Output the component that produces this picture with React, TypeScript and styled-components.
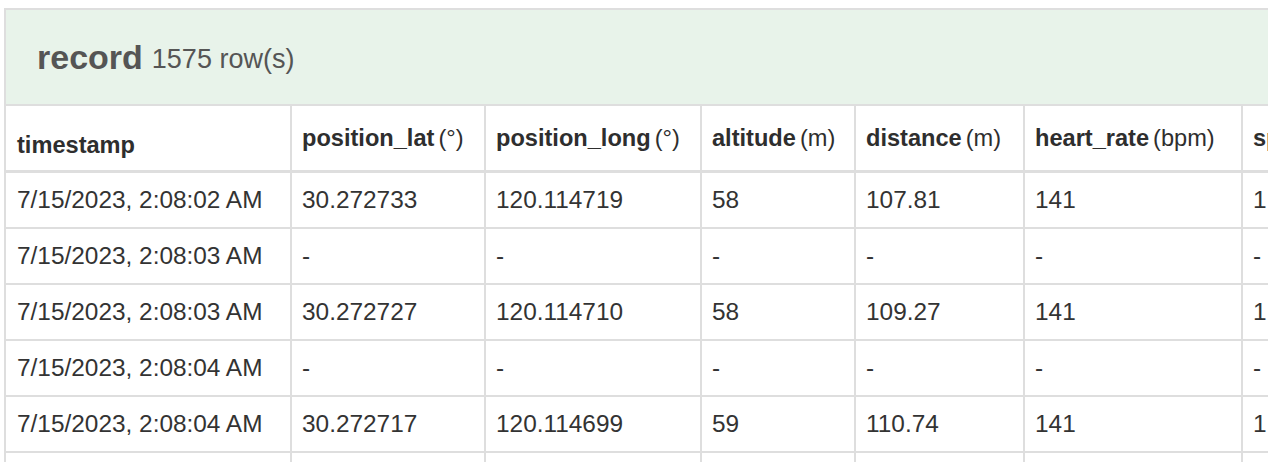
import React from "react";
import styled, { createGlobalStyle } from "styled-components";

const GlobalStyle = createGlobalStyle`
  html, body {
    margin: 0;
    padding: 0;
    background: #ffffff;
    overflow: hidden;
  }
  body {
    font-family: "Liberation Sans", Arial, Helvetica, sans-serif;
  }
`;

const Frame = styled.div`
  margin: 8px 0 0 4px;
  width: max-content;
  border-top: 2px solid #dedede;
  border-left: 2px solid #dedede;
  background: #ffffff;
`;

const TitleBar = styled.div`
  height: 94px;
  display: flex;
  align-items: center;
  padding-left: 31px;
  background: #e8f3ea;
  border-bottom: 2px solid #dedede;
  color: #555555;
  gap: 9px;
`;

const TitleName = styled.span`
  font-size: 34px;
  font-weight: 700;
`;

const TitleCount = styled.span`
  font-size: 27px;
  font-weight: 400;
  padding-top: 4px;
`;

const COLS = "286px 194px 216px 154px 169px 218px 220px";

const HeadRow = styled.div`
  display: grid;
  grid-template-columns: ${COLS};
  height: 64px;
  border-bottom: 3px solid #dedede;
`;

const BodyRow = styled.div`
  display: grid;
  grid-template-columns: ${COLS};
  height: 54px;
  border-bottom: 2px solid #dedede;
`;

const HeadCell = styled.div<{ $low?: boolean }>`
  display: flex;
  align-items: center;
  padding: ${(p) => (p.$low ? "14px 0 0 11px" : "0 0 0 10px")};
  border-right: 2px solid #dedede;
  font-size: 23.6px;
  color: #2e2e2e;
  white-space: nowrap;
  overflow: hidden;
`;

const HeadName = styled.span`
  font-weight: 700;
`;

const HeadUnit = styled.span`
  font-weight: 400;
  margin-left: 4px;
`;

const Cell = styled.div<{ $first?: boolean }>`
  display: flex;
  align-items: center;
  padding-left: ${(p) => (p.$first ? "11px" : "10px")};
  border-right: 2px solid #dedede;
  font-size: 24.4px;
  color: #333333;
  white-space: nowrap;
  overflow: hidden;
`;

const columns: { name: string; unit?: string }[] = [
  { name: "timestamp" },
  { name: "position_lat", unit: "(°)" },
  { name: "position_long", unit: "(°)" },
  { name: "altitude", unit: "(m)" },
  { name: "distance", unit: "(m)" },
  { name: "heart_rate", unit: "(bpm)" },
  { name: "speed", unit: "(m/s)" },
];

const rows: string[][] = [
  ["7/15/2023, 2:08:02 AM", "30.272733", "120.114719", "58", "107.81", "141", "1.459"],
  ["7/15/2023, 2:08:03 AM", "-", "-", "-", "-", "-", "-"],
  ["7/15/2023, 2:08:03 AM", "30.272727", "120.114710", "58", "109.27", "141", "1.459"],
  ["7/15/2023, 2:08:04 AM", "-", "-", "-", "-", "-", "-"],
  ["7/15/2023, 2:08:04 AM", "30.272717", "120.114699", "59", "110.74", "141", "1.466"],
  ["7/15/2023, 2:08:05 AM", "-", "-", "-", "-", "-", "-"],
];

export default function App() {
  return (
    <>
      <GlobalStyle />
      <Frame>
        <TitleBar>
          <TitleName>record</TitleName>
          <TitleCount>1575 row(s)</TitleCount>
        </TitleBar>
        <HeadRow>
          {columns.map((c, i) => (
            <HeadCell key={c.name} $low={i === 0}>
              <HeadName>{c.name}</HeadName>
              {c.unit && <HeadUnit>{c.unit}</HeadUnit>}
            </HeadCell>
          ))}
        </HeadRow>
        {rows.map((r, ri) => (
          <BodyRow key={ri}>
            {r.map((v, ci) => (
              <Cell key={ci} $first={ci === 0}>
                {v}
              </Cell>
            ))}
          </BodyRow>
        ))}
      </Frame>
    </>
  );
}
